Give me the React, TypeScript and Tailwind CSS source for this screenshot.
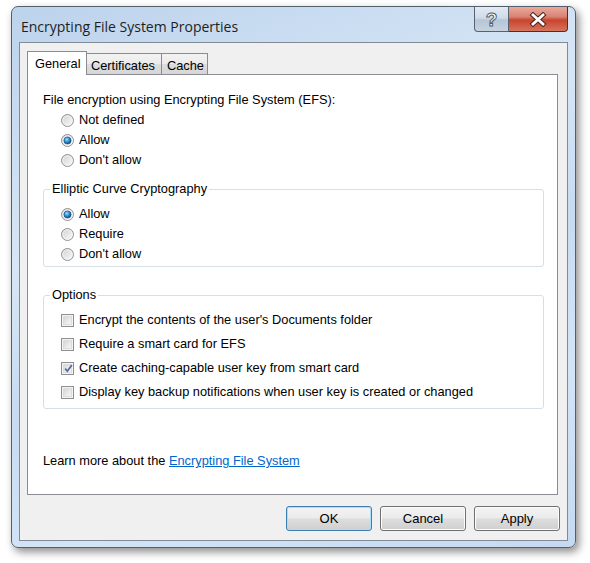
import React from "react";

function Radio({ checked }: { checked?: boolean }) {
  return (
    <svg width="13" height="13" viewBox="0 0 13 13" className="shrink-0">
      <defs>
        <linearGradient id="rbg" x1="0" y1="0" x2="1" y2="1">
          <stop offset="0" stopColor="#cfcfcf" />
          <stop offset="1" stopColor="#fdfdfd" />
        </linearGradient>
        <radialGradient id="rdot" cx="0.4" cy="0.35" r="0.7">
          <stop offset="0" stopColor="#9fe3ff" />
          <stop offset="0.5" stopColor="#2b8fd0" />
          <stop offset="1" stopColor="#0d3f73" />
        </radialGradient>
      </defs>
      <circle cx="6.5" cy="6.5" r="6" fill="url(#rbg)" stroke="#8f9296" strokeWidth="1" />
      <circle cx="6.5" cy="6.5" r="4.6" fill="none" stroke="#f4f4f4" strokeWidth="0.8" />
      {checked && <circle cx="6.5" cy="6.5" r="3.6" fill="url(#rdot)" stroke="#1c4a78" strokeWidth="0.6" />}
    </svg>
  );
}

function Check({ checked }: { checked?: boolean }) {
  return (
    <span className="relative w-[13px] h-[13px] shrink-0 border border-[#8f8f8f] bg-[#f4f4f4] p-[1px]">
      <span className="block w-full h-full border border-[#dcdcdc] bg-[linear-gradient(135deg,#d7d7d7_0%,#f7f7f7_100%)]" />
      {checked && (
        <svg width="11" height="11" viewBox="0 0 11 11" className="absolute left-[1px] top-[0px]">
          <path d="M2.2 5.6 L4.4 8.2 L8.8 2" fill="none" stroke="#4f6aa3" strokeWidth="1.7" />
        </svg>
      )}
    </span>
  );
}

function RadioRow({ label, checked }: { label: string; checked?: boolean }) {
  return (
    <div className="flex items-center h-[20px] gap-[5px]">
      <Radio checked={checked} />
      <span>{label}</span>
    </div>
  );
}

function CheckRow({ label, checked }: { label: string; checked?: boolean }) {
  return (
    <div className="flex items-center h-[24px] gap-[5px]">
      <Check checked={checked} />
      <span>{label}</span>
    </div>
  );
}

function DlgButton({ label, isDefault }: { label: string; isDefault?: boolean }) {
  return (
    <button
      className={
        "w-[86px] h-[25px] rounded-[3px] border text-[13px] text-black bg-[linear-gradient(180deg,#f3f3f3_0%,#ebebeb_48%,#dddddd_52%,#cfcfcf_100%)] " +
        (isDefault
          ? "border-[#3c7fb1] shadow-[inset_0_0_0_1px_#a9e0f8]"
          : "border-[#707070] shadow-[inset_0_0_0_1px_#fcfcfc]")
      }
    >
      {label}
    </button>
  );
}

export default function App() {
  return (
    <div
      className="w-[590px] h-[563px] bg-white pt-[6px] pl-[11px]"
      style={{ fontFamily: '"Liberation Sans", Arial, sans-serif' }}
    >
      <div className="w-[565px] h-[542px] rounded-[7px] border border-[#545f6c] shadow-[3px_4px_9px_rgba(0,0,0,0.45)] bg-[linear-gradient(160deg,#bcd3ec_0%,#d7e6f6_35%,#c7dbf1_55%,#d3e4f6_75%,#c5daf1_100%)] flex flex-col">
        <div className="h-[35px] flex items-start justify-between">
          <span
            className="pl-[9px] pt-[11px] text-[14px] leading-[18px] text-[#1e1e1e]"
            style={{ fontFamily: '"Open Sans", "Noto Sans", sans-serif' }}
          >
            Encrypting File System Properties
          </span>
          <div className="flex mr-[7px]">
            <div className="w-[35px] h-[25px] rounded-bl-[4px] border border-t-0 border-[#56626f] bg-[linear-gradient(180deg,#e3ebf3_0%,#cfdbe7_45%,#b6c6d6_55%,#c6d3df_100%)] flex items-center justify-center">
              <span className="text-[19px] leading-none font-bold text-white [-webkit-text-stroke:1px_#535e69]">?</span>
            </div>
            <div className="w-[59px] h-[25px] rounded-br-[4px] border border-t-0 border-l-0 border-[#4f2d29] bg-[linear-gradient(180deg,#eaa99c_0%,#d98473_40%,#c8442e_55%,#d5745e_100%)] flex items-center justify-center">
              <svg width="22" height="15" viewBox="0 0 22 15">
                <path d="M6 3 L16 12 M16 3 L6 12" stroke="#4a2420" strokeWidth="4.8" strokeLinecap="square" />
                <path d="M6 3 L16 12 M16 3 L6 12" stroke="#ffffff" strokeWidth="2.8" strokeLinecap="square" />
              </svg>
            </div>
          </div>
        </div>
        <div className="mx-[7px] w-[549px] h-[499px] border border-[#808b96] bg-[#f0f0f0] pt-[8px] pl-[7px] text-[12.8px] text-black">
          <div className="flex items-end h-[23px]">
            <div className="relative z-10 h-[24px] -mb-px w-[60px] border border-b-0 border-[#898c95] bg-white pl-[7px] pt-[2px]">
              General
            </div>
            <div className="h-[21px] w-[75px] border border-l-0 border-b-0 border-[#898c95] bg-[linear-gradient(180deg,#f3f3f3_0%,#ebebeb_50%,#dddddd_51%,#d6d6d6_100%)] pl-[4px] pt-[2px]">
              Certificates
            </div>
            <div className="h-[21px] w-[46px] border border-l-0 border-b-0 border-[#898c95] bg-[linear-gradient(180deg,#f3f3f3_0%,#ebebeb_50%,#dddddd_51%,#d6d6d6_100%)] pl-[5px] pt-[2px]">
              Cache
            </div>
          </div>
          <div className="w-[531px] h-[421px] border border-[#898c95] bg-white pl-[15px]">
            <div className="h-[20px] mt-[15px] flex items-center">
              File encryption using Encrypting File System (EFS):
            </div>
            <div className="pl-[18px]">
              <RadioRow label="Not defined" />
              <RadioRow label="Allow" checked />
              <RadioRow label="Don't allow" />
            </div>
            <fieldset className="mt-[12px] w-[501px] border border-[#d5dfe5] rounded-[3px] pb-[2px]">
              <legend className="ml-[6px] px-[2px] leading-[14px]">Elliptic Curve Cryptography</legend>
              <div className="pl-[17px] pt-[8px]">
                <RadioRow label="Allow" checked />
                <RadioRow label="Require" />
                <RadioRow label="Don't allow" />
              </div>
            </fieldset>
            <fieldset className="mt-[21px] w-[501px] border border-[#d5dfe5] rounded-[3px] pb-[4px]">
              <legend className="ml-[6px] px-[2px] leading-[14px]">Options</legend>
              <div className="pl-[17px] pt-[6px]">
                <CheckRow label="Encrypt the contents of the user's Documents folder" />
                <CheckRow label="Require a smart card for EFS" />
                <CheckRow label="Create caching-capable user key from smart card" checked />
                <CheckRow label="Display key backup notifications when user key is created or changed" />
              </div>
            </fieldset>
            <div className="h-[20px] mt-[42px] flex items-center">
              <span>Learn more about the&nbsp;</span>
              <a href="#" className="text-[#0066cc] underline">
                Encrypting File System
              </a>
            </div>
          </div>
          <div className="flex justify-end gap-[8px] mt-[11px] pr-[7px]">
            <DlgButton label="OK" isDefault />
            <DlgButton label="Cancel" />
            <DlgButton label="Apply" />
          </div>
        </div>
      </div>
    </div>
  );
}
